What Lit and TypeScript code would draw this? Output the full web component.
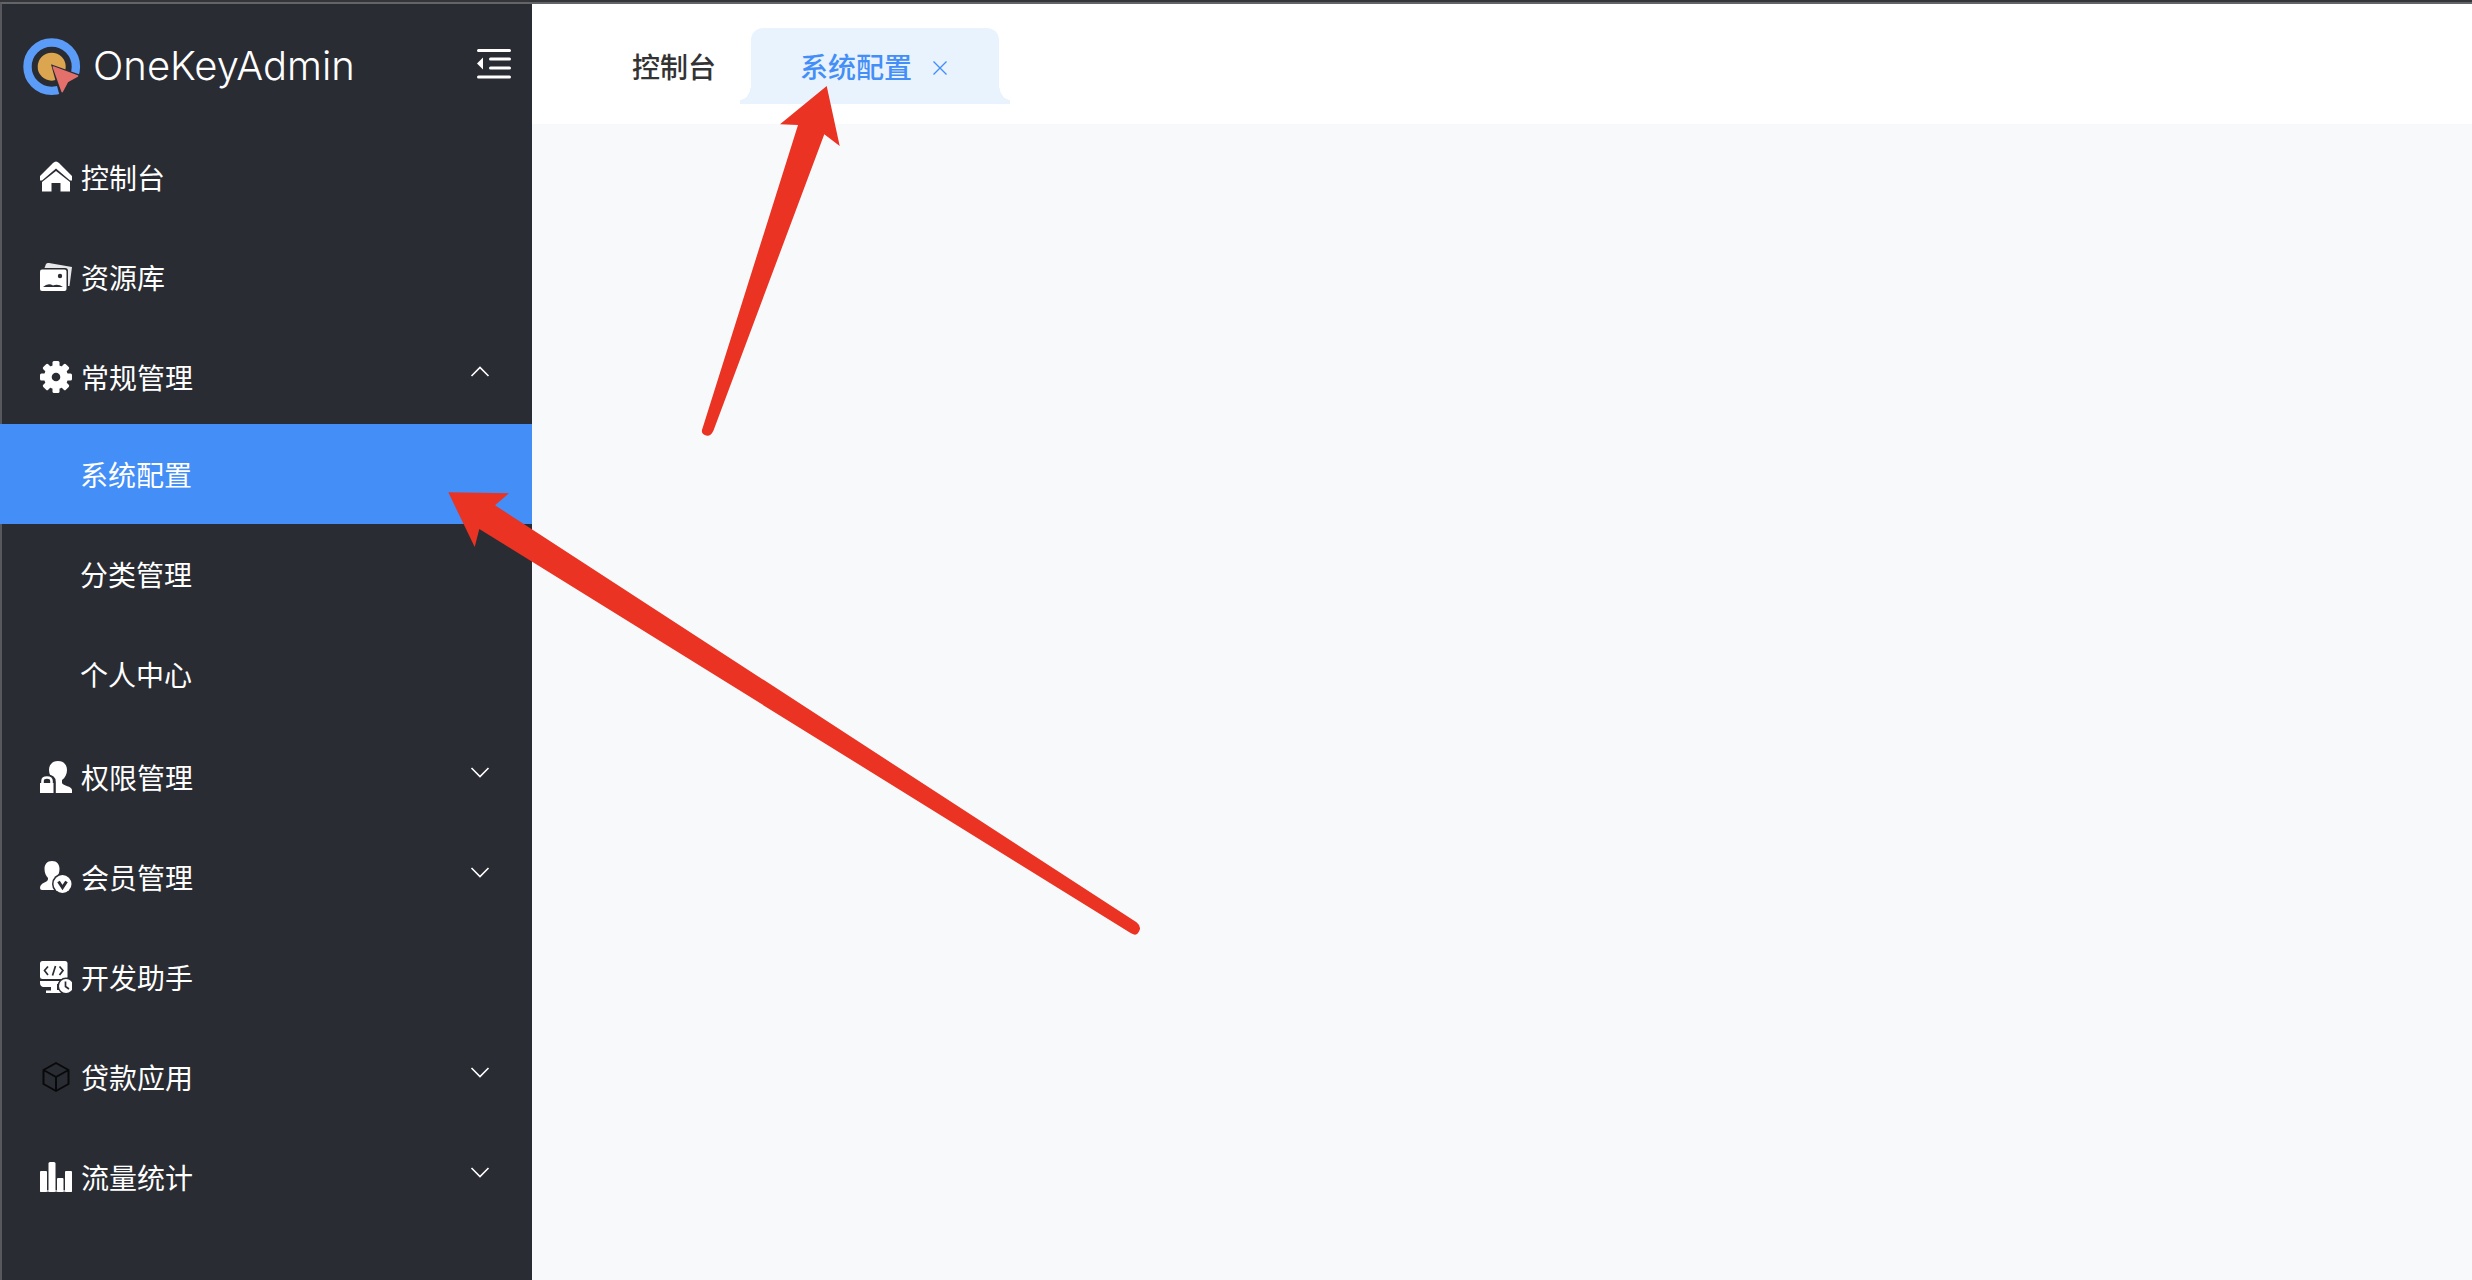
import { LitElement, html, svg, css, TemplateResult } from "lit";
import { customElement, state } from "lit/decorators.js";
import { classMap } from "lit/directives/class-map.js";

type Item = { id: string; label: string; icon: TemplateResult; children?: string[] };

const dark = "#2a2c33";

const homeIcon = svg`
  <path d="M0 15 L13 2 Q16 -1 19 2 L32 15 V19.500 L30 19.500 L16 7.500 L2 19.500 H0 Z" fill="#fff"/>
  <path d="M16 10 L30 21 V30.500 H20.500 V22 H11.500 V30.500 H2 V21 Z" fill="#fff"/>`;

const imagesIcon = svg`
  <path d="M6 3 Q7 1.500 9 2 L32 6 L29.500 25 L28 25 V10 Q28 7 25 7 H4.500 Z" fill="#e8e8ea"/>
  <rect x="0" y="8.500" width="26.500" height="21.500" rx="2" fill="#fff"/>
  <circle cx="20" cy="15" r="2.200" fill="${dark}"/>
  <path d="M3 26 Q8 21.500 13 24.500 Q18 22.500 23 26 Z" fill="${dark}"/>`;

const gearIcon = svg`
  <g fill="#fff">
    <circle cx="16" cy="16" r="12"/>
    ${[0, 45, 90, 135].map((a) => svg`<rect x="12.500" y="0" width="7" height="32" rx="1.500" transform="rotate(${a} 16 16)"/>`)}
  </g>
  <circle cx="16" cy="16" r="4.300" fill="${dark}"/>`;

const userLockIcon = svg`
  <path d="M18 0 C24 0 27 4 27 9 C27 13 25 17 22 19 V22 C23 25 32 25 32 29 V32 H15 V20 C11 17 9 13 9 9 C9 4 12 0 18 0 Z" fill="#fff"/>
  <path d="M0 21 Q0 14.500 7 14.500 Q14.800 14.500 14.800 21 V32 H0 Z" fill="${dark}" stroke="${dark}" stroke-width="2"/>
  <path d="M2.500 23 V20 Q2.500 16.500 7 16.500 Q11.500 16.500 11.500 20 V23" fill="none" stroke="#fff" stroke-width="2.600"/>
  <rect x="0" y="22" width="13.500" height="10" fill="#fff"/>`;

const userCheckIcon = svg`
  <path d="M12 0 C17 0 19.500 3.500 19.500 8 C19.500 12 18 15 16 17 C16 20 22 19 24 24 L20 29 H2 Q0 29 0 27 C0 21 8 22 8 18 V17 C6 15 4.500 12 4.500 8 C4.500 3.500 7 0 12 0 Z" fill="#fff"/>
  <circle cx="22.500" cy="23" r="10.500" fill="${dark}"/>
  <circle cx="22.500" cy="23" r="9" fill="#fff"/>
  <path d="M18.500 20.500 L22.500 26.500 L26.500 20.500" fill="none" stroke="${dark}" stroke-width="3"/>`;

const devIcon = svg`
  <rect x="0" y="0" width="27.500" height="18" rx="2.500" fill="#fff"/>
  <path d="M8 5.500 L4.500 9.500 L8 14 M19.500 5.500 L23 9.500 L19.500 14 M15.500 5 L12.500 14.500" fill="none" stroke="${dark}" stroke-width="1.700"/>
  <path d="M0 20 H20 V23 H17 V29 H22 V32 H6 V29.500 H11 V26 H3 Q0 25 0 22 Z" fill="#fff"/>
  <circle cx="26" cy="25" r="8.500" fill="${dark}"/>
  <circle cx="26" cy="25" r="7" fill="#fff"/>
  <path d="M25.500 20.500 V25.500 L29 28" fill="none" stroke="${dark}" stroke-width="1.700"/>`;

const cubeIcon = svg`
  <path d="M16 2 L28.500 9 V23 L16 30 L3.500 23 V9 Z M3.500 9 L16 16 L28.500 9 M16 16 V30" fill="none" stroke="#08090a" stroke-width="2" stroke-linejoin="round"/>`;

const chartIcon = svg`
  <g fill="#fff">
    <rect x="0" y="10" width="7" height="21" rx="1"/>
    <rect x="8.500" y="1" width="7" height="30" rx="1.500"/>
    <rect x="17" y="17" width="6.500" height="14" rx="1"/>
    <rect x="25" y="10" width="7" height="21" rx="1"/>
  </g>
  <rect x="0" y="29" width="32" height="2" fill="#fff" opacity=".6"/>`;

const ITEMS: Item[] = [
  { id: "home", label: "控制台", icon: homeIcon },
  { id: "library", label: "资源库", icon: imagesIcon },
  { id: "general", label: "常规管理", icon: gearIcon, children: ["系统配置", "分类管理", "个人中心"] },
  { id: "auth", label: "权限管理", icon: userLockIcon, children: [] },
  { id: "member", label: "会员管理", icon: userCheckIcon, children: [] },
  { id: "dev", label: "开发助手", icon: devIcon },
  { id: "loan", label: "贷款应用", icon: cubeIcon, children: [] },
  { id: "traffic", label: "流量统计", icon: chartIcon, children: [] },
];

@customElement("app-root")
export class AppRoot extends LitElement {
  @state() private open = new Set<string>(["general"]);
  @state() private active = "系统配置";

  static styles = css`
    :host {
      display: block;
      position: relative;
      min-height: 100vh;
      overflow: hidden;
      background: #f7f9fb;
      font-family: "Noto Sans CJK SC", sans-serif;
      font-size: 28px;
      line-height: 40px;
    }
    * { box-sizing: border-box; }
    button {
      font: inherit;
      color: inherit;
      background: none;
      border: 0;
      padding: 0;
      margin: 0;
      cursor: pointer;
    }
    a { color: inherit; text-decoration: none; }
    .shell {
      display: flex;
      min-height: 100vh;
      border-top: 2px solid #343538;
    }
    .side {
      flex: 0 0 532px;
      background: #2a2c33;
      border-top: 2px solid #636468;
      border-left: 2px solid #56585d;
      color: #fff;
      font-weight: 400;
    }
    .brand {
      display: flex;
      align-items: center;
      height: 120px;
      padding: 0 21px;
    }
    .logo { width: 58px; height: 58px; margin-top: 6px; flex: none; }
    .name {
      flex: 1;
      margin: 4px 0 0 12px;
      font-family: "Inter", "Liberation Sans", sans-serif;
      font-size: 40px;
      font-weight: 300;
      line-height: 48px;
    }
    .fold { display: flex; }
    .fold svg { width: 34px; height: 30px; }
    ul { list-style: none; margin: 0; padding: 0; }
    .row {
      display: flex;
      align-items: center;
      width: 100%;
      height: 100px;
      padding: 6px 42px 0 38px;
      text-align: left;
    }
    .row .icon { width: 32px; height: 32px; flex: none; margin-right: 9px; }
    .row .text { flex: 1; }
    .chev { width: 20px; height: 12px; margin-bottom: 10px; }
    .chev.up { transform: rotate(180deg); }
    .sub {
      display: flex;
      align-items: center;
      height: 100px;
      padding-left: 78px;
    }
    .selected { margin-left: -2px; padding-left: 2px; background: #448ef7; }
    .main { flex: 1; min-width: 0; border-top: 2px solid #636468; }
    .tabs {
      display: flex;
      align-items: center;
      height: 120px;
      padding: 4px 0 0 100px;
      background: #fff;
      color: #333;
      font-weight: 500;
    }
    .tab {
      position: relative;
      display: flex;
      align-items: center;
      height: 76px;
    }
    .tab.on {
      margin-left: 35px;
      padding: 0 52px 0 49px;
      background: #e9f3fe;
      color: #448ef7;
      border-radius: 12px 12px 0 0;
    }
    .tab.on::before,
    .tab.on::after {
      content: "";
      position: absolute;
      bottom: 0;
      width: 11px;
      height: 20px;
    }
    .tab.on::before {
      right: 100%;
      background: radial-gradient(ellipse 11px 16px at 0 0, transparent 98%, #e9f3fe 100%);
    }
    .tab.on::after {
      left: 100%;
      background: radial-gradient(ellipse 11px 16px at 100% 0, transparent 98%, #e9f3fe 100%);
    }
    .close { display: flex; margin: 4px 0 0 21px; }
    .close svg { width: 14px; height: 14px; }
    .marks {
      position: absolute;
      top: 0;
      left: 0;
      width: 1200px;
      height: 1000px;
      pointer-events: none;
    }
  `;

  private toggle(item: Item) {
    if (!item.children) return;
    const next = new Set(this.open);
    next.has(item.id) ? next.delete(item.id) : next.add(item.id);
    this.open = next;
  }

  private renderItem(item: Item) {
    const open = this.open.has(item.id);
    return html`<li>
      <button class="row" @click=${() => this.toggle(item)}>
        <svg class="icon" viewBox="0 0 32 32" aria-hidden="true">${item.icon}</svg>
        <span class="text">${item.label}</span>
        ${item.children
          ? html`<svg class=${classMap({ chev: true, up: open })} viewBox="0 0 20 12" aria-hidden="true">
              <path d="M1.500 2 L10 10.500 L18.500 2" fill="none" stroke="#fff" stroke-width="1.600" />
            </svg>`
          : ""}
      </button>
      ${open && item.children
        ? html`<ul>
            ${item.children.map(
              (c) => html`<li class=${classMap({ selected: c === this.active })}>
                <a class="sub" href="#" @click=${(e: Event) => {
                  e.preventDefault();
                  this.active = c;
                }}>${c}</a>
              </li>`
            )}
          </ul>`
        : ""}
    </li>`;
  }

  render() {
    return html`
      <div class="shell">
        <aside class="side">
          <div class="brand">
            <svg class="logo" viewBox="0 0 58 58" aria-hidden="true">
              <circle cx="28.700" cy="28.700" r="24.200" fill="none" stroke="#5b9cf8" stroke-width="8.400" />
              <circle cx="28.700" cy="28.700" r="14" fill="#dca650" />
              <path d="M28 26.200 L60 37.800 V60 H37.300 Z" fill="#2a2c33" />
              <path d="M30.300 29 L54.500 38 L44.500 43.700 L39.200 53.700 Z" fill="#e4706c" stroke="#e4706c" stroke-width="1.500" stroke-linejoin="round" />
            </svg>
            <span class="name">OneKeyAdmin</span>
            <button class="fold" aria-label="折叠菜单">
              <svg viewBox="0 0 34 30" aria-hidden="true">
                <path d="M1.500 1.500 H32.500 M13.500 10 H32.500 M13.500 19 H32.500 M1.500 28 H32.500" stroke="#fff" stroke-width="3" stroke-linecap="round" />
                <path d="M0 14.500 L6 8.500 V20.500 Z" fill="#fff" />
              </svg>
            </button>
          </div>
          <nav><ul>${ITEMS.map((i) => this.renderItem(i))}</ul></nav>
        </aside>
        <main class="main">
          <div class="tabs">
            <button class="tab">控制台</button>
            <div class="tab on">
              <button>系统配置</button>
              <button class="close" aria-label="关闭">
                <svg viewBox="0 0 14 14" aria-hidden="true"><path d="M.5 .5 L13.500 13.500 M13.500 .5 L.5 13.500" stroke="#448ef7" stroke-width="1.400" /></svg>
              </button>
            </div>
          </div>
        </main>
      </div>
      <svg class="marks" viewBox="0 0 1200 1000" fill="#ea3323" aria-hidden="true">
        <path d="M826.700 86 L839.700 146 L824.300 134.300 L713.500 430.500 Q711 436 707 435.700 Q701 434.500 702 430 L798 125 L780 124.300 Z" />
        <path d="M448.300 492.300 L509 493.300 L495 505.300 L1136.500 922.300 Q1140.500 925.500 1140 929 Q1138 935.500 1134 934.500 L1131 933.300 L479.300 529 L474.700 547 Z" />
      </svg>
    `;
  }
}
